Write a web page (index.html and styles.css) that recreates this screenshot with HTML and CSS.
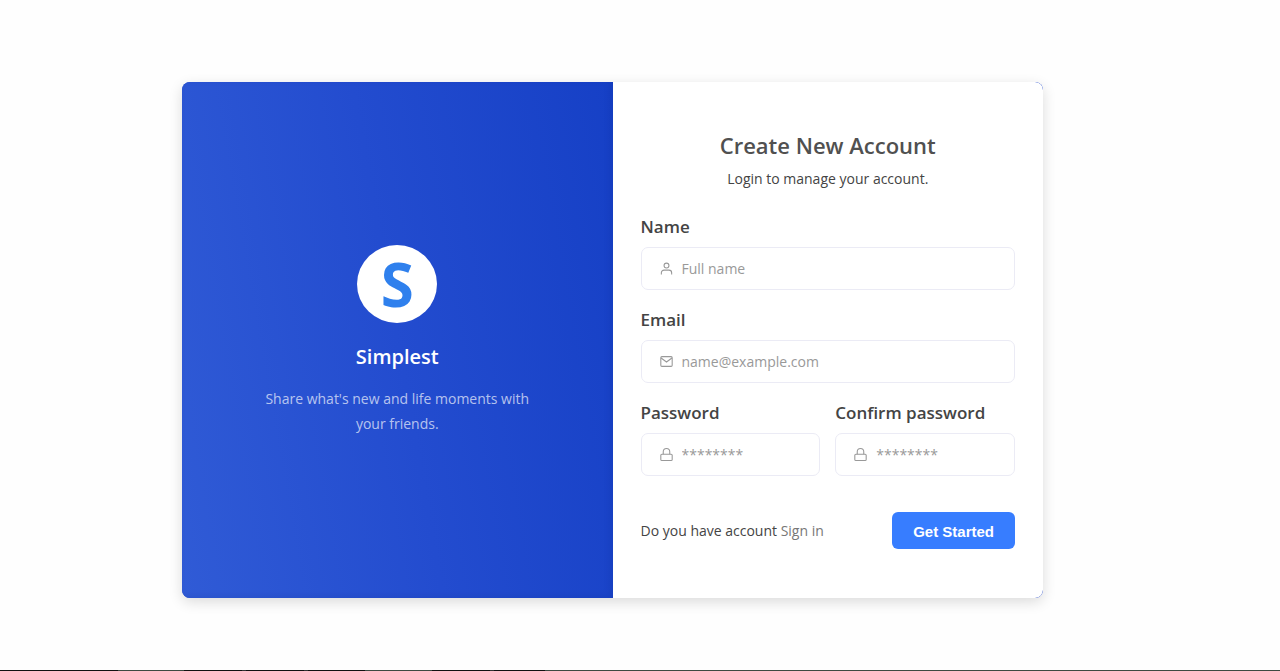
FILE: index.html
```html
<!DOCTYPE html>
<html lang="en">
<head>
<meta charset="utf-8">
<meta name="viewport" content="width=device-width, initial-scale=1">
<title>Create New Account</title>
<link rel="stylesheet" href="styles.css">
</head>
<body>
<main class="page">
  <div class="card">
    <section class="brand">
      <div class="logo">S</div>
      <h2 class="brand-name">Simplest</h2>
      <p class="brand-text">Share what's new and life moments with your friends.</p>
    </section>
    <form class="signup">
      <h1 class="title">Create New Account</h1>
      <p class="subtitle">Login to manage your account.</p>
      <div class="field">
        <label class="label" for="name">Name</label>
        <div class="control">
          <svg class="icon" viewBox="0 0 24 24" aria-hidden="true"><circle cx="12" cy="6.500" r="4.500"/><path d="M2.500 23v-3a5 5 0 0 1 5-5h9a5 5 0 0 1 5 5v3"/></svg>
          <input class="input" id="name" type="text" placeholder="Full name">
        </div>
      </div>
      <div class="field">
        <label class="label" for="email">Email</label>
        <div class="control">
          <svg class="icon" viewBox="0 0 24 24" aria-hidden="true"><rect x="1.500" y="3" width="21" height="18" rx="2"/><path d="M2 5.500l10 7.500 10-7.500"/></svg>
          <input class="input" id="email" type="email" placeholder="name@example.com">
        </div>
      </div>
      <div class="field-row">
        <div class="field">
          <label class="label" for="password">Password</label>
          <div class="control">
            <svg class="icon" viewBox="0 0 24 24" aria-hidden="true"><rect x="1.500" y="11.500" width="21" height="11.500" rx="2"/><path d="M6 11.500V7a6 6 0 0 1 12 0v4.500"/></svg>
            <input class="input" id="password" type="password" placeholder="********">
          </div>
        </div>
        <div class="field">
          <label class="label" for="confirm">Confirm password</label>
          <div class="control">
            <svg class="icon" viewBox="0 0 24 24" aria-hidden="true"><rect x="1.500" y="11.500" width="21" height="11.500" rx="2"/><path d="M6 11.500V7a6 6 0 0 1 12 0v4.500"/></svg>
            <input class="input" id="confirm" type="password" placeholder="********">
          </div>
        </div>
      </div>
      <div class="actions">
        <p class="signin">Do you have account <a class="signin-link" href="#">Sign in</a></p>
        <button class="submit" type="submit">Get Started</button>
      </div>
    </form>
  </div>
</main>
<div class="strip"></div>
</body>
</html>
```
FILE: styles.css
```css
* {
  box-sizing: border-box;
}

body {
  display: flex;
  flex-direction: column;
  min-height: 100vh;
  margin: 0;
  background: #fefefe;
  color: #444;
  font: 14px/20px "Open Sans", sans-serif;
}

h1, h2, p {
  margin: 0;
}

.page {
  display: flex;
  flex: 1;
  align-items: center;
  justify-content: center;
  padding: 30px 75px 20px 20px;
}

.card {
  display: grid;
  grid-template-columns: minmax(0, 1fr) minmax(0, 1fr);
  width: 100%;
  max-width: 861px;
  border-radius: 8px;
  background: #2a50d0;
  box-shadow: 0 4px 14px rgba(0, 0, 0, 0.14);
  overflow: hidden;
}

.brand {
  display: flex;
  flex-direction: column;
  align-items: center;
  justify-content: center;
  padding: 28px 75px;
  background: linear-gradient(80deg, #305bd6, #234ccf 50%, #1640c6);
  box-shadow: inset -3px -2px 6px rgba(10, 30, 120, 0.12);
  text-align: center;
}

.logo {
  width: 80px;
  height: 78px;
  border-radius: 50%;
  background: #fff;
  color: #2f80ed;
  font-size: 60px;
  font-weight: 700;
  line-height: 78px;
}

.brand-name {
  margin-top: 20px;
  color: #fff;
  font-size: 20px;
  font-weight: 600;
  line-height: 28px;
}

.brand-text {
  margin-top: 15px;
  color: rgba(255, 255, 255, 0.68);
  font-size: 14px;
  line-height: 25px;
}

.signup {
  padding: 48px 28px 49px;
  border-radius: 0 8px 8px 0;
  background: #fff;
}

.title {
  color: #505050;
  font-size: 22px;
  font-weight: 600;
  line-height: 30px;
  text-align: center;
}

.subtitle {
  margin: 9px 0 26px;
  text-align: center;
}

.field {
  margin-bottom: 18px;
}

.field-row {
  display: grid;
  grid-template-columns: minmax(0, 1fr) minmax(0, 1fr);
  gap: 15px;
}

.label {
  display: block;
  margin-bottom: 8px;
  font-size: 17px;
  font-weight: 600;
  line-height: 24px;
}

.control {
  display: flex;
  align-items: center;
  gap: 9px;
  height: 43px;
  padding: 0 18px;
  border: 1px solid #ebebf5;
  border-radius: 7px;
}

.icon {
  flex: none;
  width: 13px;
  height: 13px;
  fill: none;
  stroke: #999;
  stroke-width: 2;
}

.input {
  flex: 1;
  min-width: 0;
  padding: 0;
  border: 0;
  outline: 0;
  background: none;
  color: #444;
  font: inherit;
}

.input::placeholder {
  color: #999;
}

.actions {
  display: flex;
  align-items: center;
  justify-content: space-between;
  margin-top: 18px;
}

.signin-link {
  color: #777;
  text-decoration: none;
}

.submit {
  height: 37px;
  padding: 2px 21px 0;
  border: 0;
  border-radius: 6px;
  background: #377dff;
  color: #fff;
  font: 700 15px/20px "Liberation Sans", Arial, sans-serif;
}

.strip {
  height: 1px;
  background: linear-gradient(90deg, #111 0 118px, #3c4a42 118px 184px, #111 184px 242px, #333 242px 246px, #111 246px 304px, #333 304px 308px, #111 308px 365px, #3c4a42 365px 432px, #111 432px 490px, #333 490px 494px, #111 494px 545px, #3c4a42 545px);
}
```
